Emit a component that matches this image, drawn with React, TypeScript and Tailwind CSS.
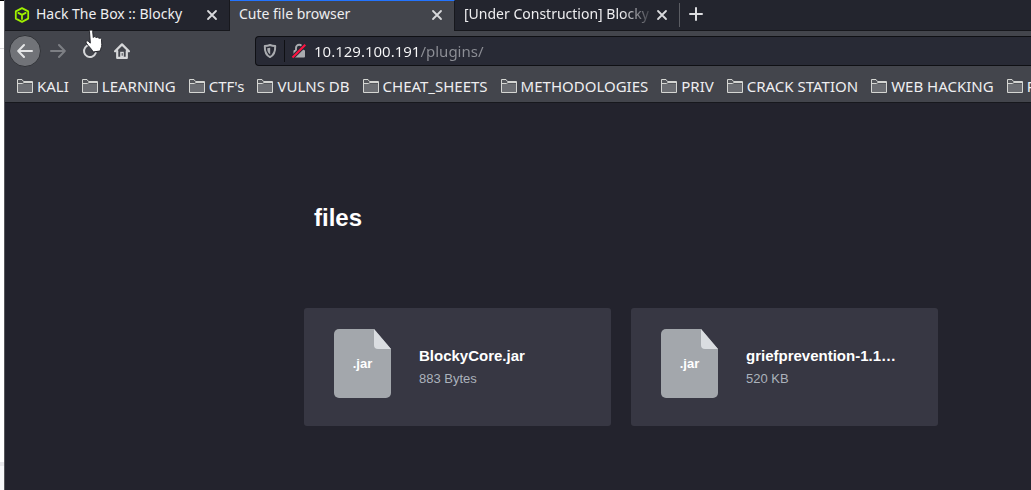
import React from "react";

const bookmarks = [
  "KALI",
  "LEARNING",
  "CTF's",
  "VULNS DB",
  "CHEAT_SHEETS",
  "METHODOLOGIES",
  "PRIV",
  "CRACK STATION",
  "WEB HACKING",
  "P",
];

const files = [
  { name: "BlockyCore.jar", size: "883 Bytes", ext: ".jar" },
  { name: "griefprevention-1.1…", size: "520 KB", ext: ".jar" },
];

function CubeLogo() {
  return (
    <svg className="size-4 shrink-0" viewBox="0 0 16 16" fill="none" stroke="#9fef00" strokeWidth="1.8" strokeLinejoin="round" aria-hidden="true">
      <path d="M8 1.1 14.2 4.4v7.2L8 14.9 1.8 11.6V4.4Z" />
      <path d="M4.3 5.9 8 7.9l3.7-2M8 7.9v4.2" strokeLinecap="round" />
    </svg>
  );
}

function CloseIcon() {
  return (
    <svg className="size-4" viewBox="0 0 16 16" fill="none" stroke="#d8d9dc" strokeWidth="1.8" strokeLinecap="round" aria-hidden="true">
      <path d="m4 4 8 8M12 4l-8 8" />
    </svg>
  );
}

function FolderIcon() {
  return (
    <svg className="size-4 shrink-0" viewBox="0 0 16 16" fill="none" stroke="#d5d6d3" strokeWidth="1" strokeLinejoin="round" aria-hidden="true">
      <path d="M.5 14.5v-13h4.500l1.500 2h9v11Z" fill="#54565b" />
      <path d="M1 6h14v8H1Z" fill="#6b6d72" stroke="none" />
      <path d="M.5 5.500h5l1.500-1h8.500" />
    </svg>
  );
}

function FileIcon({ ext }: { ext: string }) {
  return (
    <span className="grid h-[69px] w-[57px] shrink-0 place-items-center">
      <svg className="col-start-1 row-start-1 h-full w-full" viewBox="0 0 57 69" aria-hidden="true">
        <path d="M5 0h35l17 20v44a5 5 0 0 1-5 5H5a5 5 0 0 1-5-5V5a5 5 0 0 1 5-5Z" fill="#a3a7ac" />
        <path d="M40 0l17 20H44a4 4 0 0 1-4-4Z" fill="#dadde1" />
      </svg>
      <span className="col-start-1 row-start-1 text-[13px] leading-4 font-bold">{ext}</span>
    </span>
  );
}

function Tab({ title, active, icon }: { title: string; active?: boolean; icon?: boolean }) {
  return (
    <div
      role="tab"
      aria-selected={!!active}
      className={
        active
          ? "flex w-[225px] shrink-0 items-center border-t border-r border-t-[#2374ff] border-r-[#17181d] bg-[#43454c] pr-[9px] pb-[2px] pl-[9px]"
          : icon
            ? "flex w-[225px] shrink-0 items-center border-r border-b border-[#17181d] bg-[#23252e] pr-[9px] pl-[9px]"
            : "flex w-[224px] shrink-0 items-center border-b border-[#17181d] bg-[#23252e] pr-[9px] pl-[9px]"
      }
    >
      {icon && (
        <span className="mr-[6px]">
          <CubeLogo />
        </span>
      )}
      <span
        className={
          active || icon
            ? "min-w-0 grow pb-[2px] text-[14px] leading-5 whitespace-nowrap"
            : "min-w-0 grow mask-r-from-[calc(100%-32px)] pb-[2px] text-[14px] leading-5 whitespace-nowrap"
        }
      >
        {title}
      </span>
      <button type="button" aria-label="Close tab">
        <CloseIcon />
      </button>
    </div>
  );
}

export default function App() {
  return (
    <div className="flex min-h-screen overflow-hidden bg-[#f9f9fb] font-['Noto_Sans',sans-serif] text-[#eeeef0]">
      <div className="flex w-1 shrink-0 flex-col" aria-hidden="true">
        <div className="h-px bg-black" />
        <div className="h-[47px] bg-white" />
        <div className="h-px bg-[#d8d8da]" />
        <div className="grow bg-white" />
        <div className="h-1 bg-[#e9e9ec]" />
        <div className="h-6 bg-[#f7f8fa]" />
      </div>
      <div className="relative flex min-w-0 grow flex-col border-l border-[#55565b] bg-[#23232d]">
        <div role="tablist" className="flex h-[31px] bg-[#23252e]">
          <Tab title="Hack The Box :: Blocky" icon />
          <Tab title="Cute file browser" active />
          <Tab title="[Under Construction] Blocky" />
          <div className="flex grow items-center border-b border-[#17181d]">
            <div className="h-6 w-px bg-[#5b5d63]" />
            <button type="button" aria-label="New tab" className="ml-2 pb-[2px]">
              <svg className="size-4" viewBox="0 0 16 16" fill="none" stroke="#dcdde0" strokeWidth="2" strokeLinecap="round" aria-hidden="true">
                <path d="M8 2v12M2 8h12" />
              </svg>
            </button>
          </div>
        </div>

        <div className="flex h-10 items-center bg-[#43454c] pl-1">
          <button type="button" aria-label="Back" className="grid size-8 place-items-center rounded-full border border-[#313338] bg-[#717378]">
            <svg className="size-4" viewBox="0 0 16 16" fill="none" stroke="#e4e5e6" strokeWidth="2" strokeLinecap="round" strokeLinejoin="round" aria-hidden="true">
              <path d="M15 8H1.5M7 2 1.2 8 7 14" />
            </svg>
          </button>
          <button type="button" aria-label="Forward" className="ml-[9px]">
            <svg className="size-4" viewBox="0 0 16 16" fill="none" stroke="#7d7f84" strokeWidth="2" strokeLinecap="round" strokeLinejoin="round" aria-hidden="true">
              <path d="M1 8h13.5M9 2l5.8 6L9 14" />
            </svg>
          </button>
          <button type="button" aria-label="Reload" className="ml-4">
            <svg className="size-4" viewBox="0 0 16 16" fill="none" stroke="#d6d7d9" strokeWidth="2" strokeLinecap="round" aria-hidden="true">
              <path d="M13.7 10A6 6 0 1 1 12.2 3.7" />
              <path d="M14 1.5v4.2H9.8" strokeLinejoin="round" />
            </svg>
          </button>
          <button type="button" aria-label="Home" className="ml-4">
            <svg className="size-4" viewBox="0 0 16 16" fill="none" stroke="#d6d7d9" strokeWidth="2.2" strokeLinecap="round" strokeLinejoin="round" aria-hidden="true">
              <path d="M1.100 8.300 8 1.400l6.900 6.900" />
              <path d="M3.200 8v6.900h9.600V8" />
              <path d="M6.200 14.500V8.800h3.600v5.700Z" fill="#d6d7d9" stroke="none" />
              <path d="M8.200 10.500v1.800" stroke="#43454c" strokeWidth="1" />
            </svg>
          </button>
          <div className="ml-[125px] flex h-[30px] grow items-center rounded-l border border-r-0 border-[#0f1014] bg-[#282a35]">
            <svg className="ml-[6px] size-4" viewBox="0 0 16 16" fill="none" stroke="#a9abaf" aria-hidden="true">
              <path d="M8 2c1.700.6 3.400.9 5.200 1 .2 5.500-.9 9-5.200 11.100C3.700 12 2.600 8.500 2.800 3 4.600 2.900 6.300 2.600 8 2Z" strokeWidth="2" strokeLinejoin="round" />
              <path d="M8.200 4.700v6.800C6 10 5.200 8 5.200 5.200 6.300 5.200 7.200 5 8.200 4.700Z" fill="#a9abaf" stroke="none" />
            </svg>
            <div className="ml-[6px] h-[22px] w-px bg-[#0f1014]" />
            <svg className="ml-[6px] size-4" viewBox="0 0 16 16" fill="none" aria-hidden="true">
              <path d="M5 7.500V5a3.200 3.200 0 0 1 6.400 0v2.500" stroke="#a9abaf" strokeWidth="1.900" />
              <rect x="2.500" y="7" width="11.500" height="7.500" rx="1" fill="#a9abaf" />
              <path d="M1.800 14.200 14 2" stroke="#282a35" strokeWidth="4" />
              <path d="M1.500 14.500 14.300 1.700" stroke="#ff1240" strokeWidth="2" />
            </svg>
            <input
              type="text"
              aria-label="Address"
              defaultValue="10.129.100.191/plugins/"
              className="ml-[7px] min-w-0 grow bg-[linear-gradient(to_right,#f9f9fa_106px,#8d8f96_106px)] bg-clip-text text-[15px] leading-5 text-transparent outline-none"
            />
          </div>
        </div>

        <nav className="flex h-8 items-center gap-[13px] overflow-hidden border-b border-[#17181d] bg-[#43454c] pb-[2px] pl-3">
          {bookmarks.map((name) => (
            <a key={name} href="#" className="flex shrink-0 items-center gap-1 text-[15px] leading-5 whitespace-nowrap">
              <FolderIcon />
              {name}
            </a>
          ))}
        </nav>

        <main className="grow pr-[93px] pl-[299px] font-['Liberation_Sans',sans-serif] text-white">
          <h1 className="pt-[101px] pl-[10px] text-2xl leading-7 font-bold">files</h1>
          <ul className="mt-[76px] grid grid-cols-2 gap-5">
            {files.map((file) => (
              <li key={file.name}>
                <a href="#" className="flex h-[118px] rounded-[3px] bg-[#373743] px-[30px] pt-[21px]">
                  <FileIcon ext={file.ext} />
                  <span className="mt-[17px] ml-7 flex flex-col">
                    <span className="text-[15px] leading-5 font-bold whitespace-nowrap">{file.name}</span>
                    <span className="mt-[3px] text-[13px] leading-5 text-[#abb2bc]">{file.size}</span>
                  </span>
                </a>
              </li>
            ))}
          </ul>
        </main>

        <svg className="pointer-events-none absolute top-[29px] left-[80px] h-[25px] w-[18px]" viewBox="0 0 18 24" fill="#fff" stroke="#25262c" strokeWidth="1" strokeLinejoin="round" aria-hidden="true">
          <path d="M4.500 2c0-2 3-2 3.200 0l.6 6c.5-1.300 2.600-1.200 2.900.3.500-1 2.500-.8 2.800.7.700-.8 2.400-.4 2.500 1l.3 5c.1 3-1.300 4-1.600 6.500L8 22.500C7 19.500 3.500 17 1.200 13.500c-1-1.700.9-2.900 2.100-1.700l2 1.800Z" />
        </svg>
      </div>
    </div>
  );
}
